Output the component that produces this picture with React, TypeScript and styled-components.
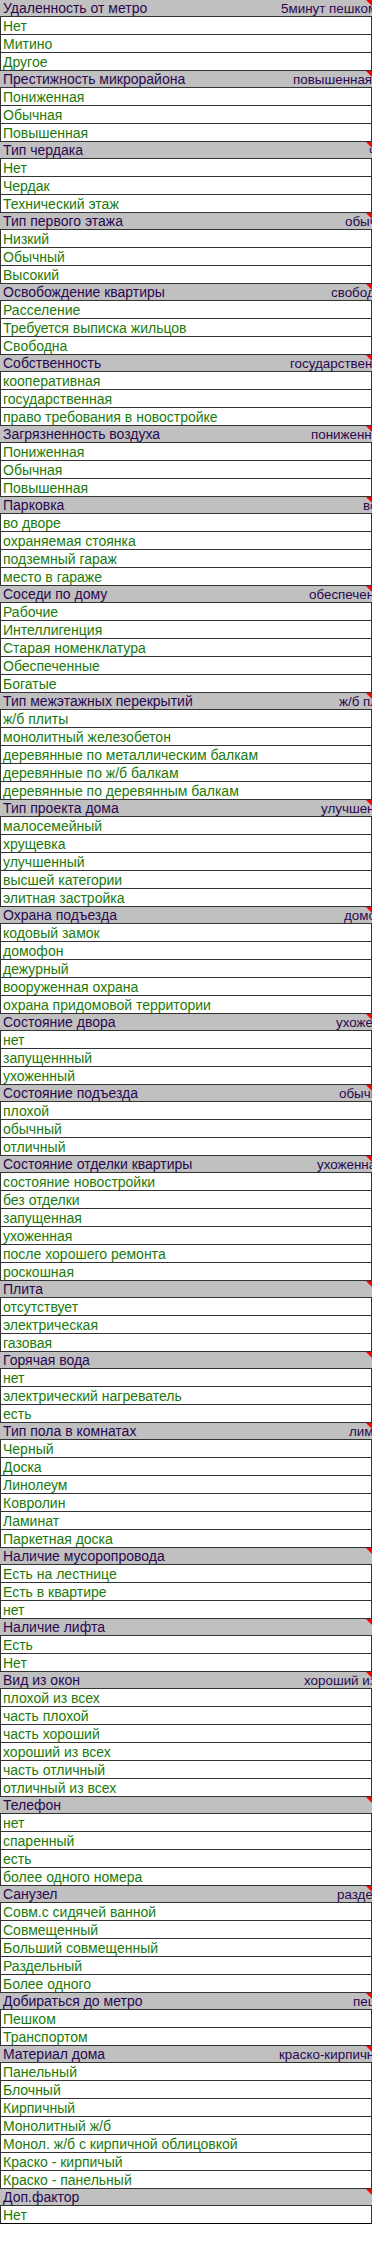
import React from 'react';
import styled, { createGlobalStyle } from 'styled-components';

const GlobalStyle = createGlobalStyle`
  html, body {
    margin: 0;
    padding: 0;
    background: #fff;
  }
  body {
    font-family: "Liberation Sans", Arial, sans-serif;
  }
`;

interface IGroup {
  title: string;
  value?: string;
  valueAt?: number;
  items: string[];
}

const groups: IGroup[] = [
  { title: 'Удаленность от метро', value: '5минут пешком', valueAt: 281, items: ['Нет', 'Митино', 'Другое'] },
  { title: 'Престижность микрорайона', value: 'повышенная', valueAt: 293, items: ['Пониженная', 'Обычная', 'Повышенная'] },
  { title: 'Тип чердака', value: 'чердак', valueAt: 369, items: ['Нет', 'Чердак', 'Технический этаж'] },
  { title: 'Тип первого этажа', value: 'обычный', valueAt: 345, items: ['Низкий', 'Обычный', 'Высокий'] },
  { title: 'Освобождение квартиры', value: 'свободна', valueAt: 331, items: ['Расселение', 'Требуется выписка жильцов', 'Свободна'] },
  { title: 'Собственность', value: 'государственная', valueAt: 290, items: ['кооперативная', 'государственная', 'право требования в новостройке'] },
  { title: 'Загрязненность воздуха', value: 'пониженная', valueAt: 311, items: ['Пониженная', 'Обычная', 'Повышенная'] },
  { title: 'Парковка', value: 'во дворе', valueAt: 363, items: ['во дворе', 'охраняемая стоянка', 'подземный гараж', 'место в гараже'] },
  { title: 'Соседи по дому', value: 'обеспеченные', valueAt: 309, items: ['Рабочие', 'Интеллигенция', 'Старая номенклатура', 'Обеспеченные', 'Богатые'] },
  {
    title: 'Тип межэтажных перекрытий',
    value: 'ж/б плиты',
    valueAt: 339,
    items: ['ж/б плиты', 'монолитный железобетон', 'деревянные по металлическим балкам', 'деревянные по ж/б балкам', 'деревянные по деревянным балкам']
  },
  { title: 'Тип проекта дома', value: 'улучшенный', valueAt: 321, items: ['малосемейный', 'хрущевка', 'улучшенный', 'высшей категории', 'элитная застройка'] },
  { title: 'Охрана подъезда', value: 'домофон', valueAt: 344, items: ['кодовый замок', 'домофон', 'дежурный', 'вооруженная охрана', 'охрана придомовой территории'] },
  { title: 'Состояние двора', value: 'ухоженный', valueAt: 336, items: ['нет', 'запущеннный', 'ухоженный'] },
  { title: 'Состояние подъезда', value: 'обычный', valueAt: 339, items: ['плохой', 'обычный', 'отличный'] },
  {
    title: 'Состояние отделки квартиры',
    value: 'ухоженная',
    valueAt: 317,
    items: ['состояние новостройки', 'без отделки', 'запущенная', 'ухоженная', 'после хорошего ремонта', 'роскошная']
  },
  { title: 'Плита', items: ['отсутствует', 'электрическая', 'газовая'] },
  { title: 'Горячая вода', items: ['нет', 'электрический нагреватель', 'есть'] },
  { title: 'Тип пола в комнатах', value: 'лим', valueAt: 349, items: ['Черный', 'Доска', 'Линолеум', 'Ковролин', 'Ламинат', 'Паркетная доска'] },
  { title: 'Наличие мусоропровода', items: ['Есть на лестнице', 'Есть в квартире', 'нет'] },
  { title: 'Наличие лифта', items: ['Есть', 'Нет'] },
  {
    title: 'Вид из окон',
    value: 'хороший из всех',
    valueAt: 304,
    items: ['плохой из всех', 'часть плохой', 'часть хороший', 'хороший из всех', 'часть отличный', 'отличный из всех']
  },
  { title: 'Телефон', items: ['нет', 'спаренный', 'есть', 'более одного номера'] },
  { title: 'Санузел', value: 'раздельный', valueAt: 337, items: ['Совм.с сидячей ванной', 'Совмещенный', 'Больший совмещенный', 'Раздельный', 'Более одного'] },
  { title: 'Добираться до метро', value: 'пешком', valueAt: 353, items: ['Пешком', 'Транспортом'] },
  {
    title: 'Материал дома',
    value: 'краско-кирпичный',
    valueAt: 279,
    items: ['Панельный', 'Блочный', 'Кирпичный', 'Монолитный ж/б', 'Монол. ж/б с кирпичной облицовкой', 'Краско - кирпичый', 'Краско - панельный']
  },
  { title: 'Доп.фактор', items: ['Нет'] }
];

const Sheet = styled.div`
  width: 372px;
  display: flex;
  flex-direction: column;
  font-size: 14px;
  line-height: 1;
  white-space: nowrap;
`;

const HeaderRow = styled.div<{ $valueAt: number }>`
  position: relative;
  display: grid;
  grid-template-columns: ${(p) => p.$valueAt - 3}px auto;
  align-items: end;
  height: 17px;
  box-sizing: border-box;
  padding-left: 3px;
  background: #c0c0c0;
  border-bottom: 1px solid #333;
  color: #2a0850;
  overflow: hidden;

  /* comment marker, red corner */
  &::after {
    content: '';
    position: absolute;
    top: 0;
    right: 0;
    border-top: 6px solid #ff0000;
    border-left: 6px solid transparent;
  }
`;

const Cell = styled.span`
  display: block;
  padding-bottom: 1px;
`;

const ValueCell = styled(Cell)`
  font-size: 13.4px;
`;

const ItemRow = styled.div<{ $last?: boolean }>`
  display: flex;
  align-items: flex-end;
  height: 18px;
  box-sizing: border-box;
  padding-left: 2px;
  border-left: 1px solid #333;
  border-right: 1px solid #333;
  border-bottom: 1px solid ${(p) => (p.$last ? '#000' : '#333')};
  color: #1c7a0c;
  overflow: hidden;
`;

const App = () => {
  return (
    <>
      <GlobalStyle />
      <Sheet>
        {groups.map((g, gi) => (
          <React.Fragment key={g.title}>
            <HeaderRow $valueAt={g.valueAt ?? 372}>
              <Cell>{g.title}</Cell>
              {g.value && <ValueCell>{g.value}</ValueCell>}
            </HeaderRow>
            {g.items.map((item, i) => (
              <ItemRow key={i} $last={gi === groups.length - 1}>
                <Cell>{item}</Cell>
              </ItemRow>
            ))}
          </React.Fragment>
        ))}
      </Sheet>
    </>
  );
};

export default App;
